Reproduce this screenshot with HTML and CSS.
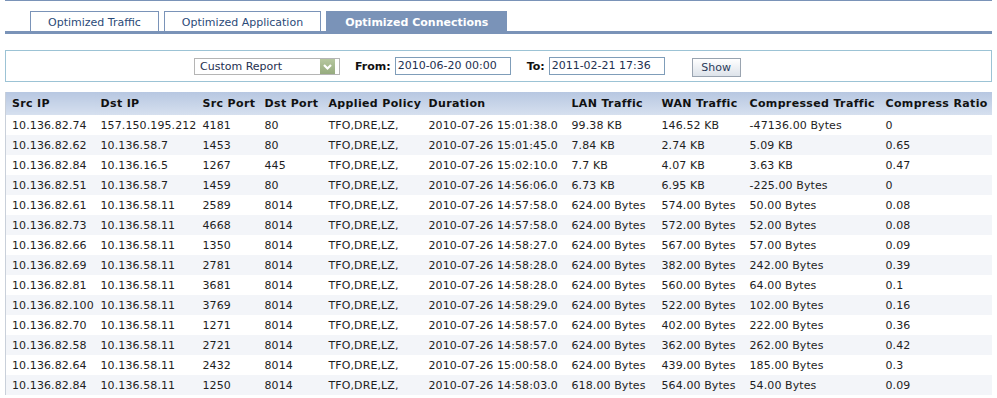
FILE: index.html
```html
<!DOCTYPE html>
<html>
<head>
<meta charset="utf-8">
<link rel="stylesheet" href="styles.css">
</head>
<body>
<div class="page">
  <div class="tabbar">
    <div class="tab">Optimized Traffic</div>
    <div class="tab">Optimized Application</div>
    <div class="tab active">Optimized Connections</div>
  </div>
  <div class="filter">
    <div class="select"><span>Custom Report</span><span class="arrow"><svg width="15" height="15" viewBox="0 0 15 15"><path d="M4 6 L7.5 9.5 L11 6" fill="none" stroke="#fff" stroke-width="2.2"/></svg></span></div>
    <label class="lbl from">From:</label>
    <div class="input">2010-06-20 00:00</div>
    <label class="lbl to">To:</label>
    <div class="input">2011-02-21 17:36</div>
    <button class="btn">Show</button>
  </div>
  <table class="grid">
    <colgroup>
      <col style="width:89px"><col style="width:102px"><col style="width:62px"><col style="width:64px"><col style="width:100px"><col style="width:143px"><col style="width:90px"><col style="width:88px"><col style="width:136px"><col style="width:112px">
    </colgroup>
    <thead>
      <tr><th>Src IP</th><th>Dst IP</th><th>Src Port</th><th>Dst Port</th><th>Applied Policy</th><th>Duration</th><th>LAN Traffic</th><th>WAN Traffic</th><th>Compressed Traffic</th><th>Compress Ratio</th></tr>
    </thead>
    <tbody>
      <tr><td>10.136.82.74</td><td>157.150.195.212</td><td>4181</td><td>80</td><td>TFO,DRE,LZ,</td><td>2010-07-26 15:01:38.0</td><td>99.38 KB</td><td>146.52 KB</td><td>-47136.00 Bytes</td><td>0</td></tr>
      <tr><td>10.136.82.62</td><td>10.136.58.7</td><td>1453</td><td>80</td><td>TFO,DRE,LZ,</td><td>2010-07-26 15:01:45.0</td><td>7.84 KB</td><td>2.74 KB</td><td>5.09 KB</td><td>0.65</td></tr>
      <tr><td>10.136.82.84</td><td>10.136.16.5</td><td>1267</td><td>445</td><td>TFO,DRE,LZ,</td><td>2010-07-26 15:02:10.0</td><td>7.7 KB</td><td>4.07 KB</td><td>3.63 KB</td><td>0.47</td></tr>
      <tr><td>10.136.82.51</td><td>10.136.58.7</td><td>1459</td><td>80</td><td>TFO,DRE,LZ,</td><td>2010-07-26 14:56:06.0</td><td>6.73 KB</td><td>6.95 KB</td><td>-225.00 Bytes</td><td>0</td></tr>
      <tr><td>10.136.82.61</td><td>10.136.58.11</td><td>2589</td><td>8014</td><td>TFO,DRE,LZ,</td><td>2010-07-26 14:57:58.0</td><td>624.00 Bytes</td><td>574.00 Bytes</td><td>50.00 Bytes</td><td>0.08</td></tr>
      <tr><td>10.136.82.73</td><td>10.136.58.11</td><td>4668</td><td>8014</td><td>TFO,DRE,LZ,</td><td>2010-07-26 14:57:58.0</td><td>624.00 Bytes</td><td>572.00 Bytes</td><td>52.00 Bytes</td><td>0.08</td></tr>
      <tr><td>10.136.82.66</td><td>10.136.58.11</td><td>1350</td><td>8014</td><td>TFO,DRE,LZ,</td><td>2010-07-26 14:58:27.0</td><td>624.00 Bytes</td><td>567.00 Bytes</td><td>57.00 Bytes</td><td>0.09</td></tr>
      <tr><td>10.136.82.69</td><td>10.136.58.11</td><td>2781</td><td>8014</td><td>TFO,DRE,LZ,</td><td>2010-07-26 14:58:28.0</td><td>624.00 Bytes</td><td>382.00 Bytes</td><td>242.00 Bytes</td><td>0.39</td></tr>
      <tr><td>10.136.82.81</td><td>10.136.58.11</td><td>3681</td><td>8014</td><td>TFO,DRE,LZ,</td><td>2010-07-26 14:58:28.0</td><td>624.00 Bytes</td><td>560.00 Bytes</td><td>64.00 Bytes</td><td>0.1</td></tr>
      <tr><td>10.136.82.100</td><td>10.136.58.11</td><td>3769</td><td>8014</td><td>TFO,DRE,LZ,</td><td>2010-07-26 14:58:29.0</td><td>624.00 Bytes</td><td>522.00 Bytes</td><td>102.00 Bytes</td><td>0.16</td></tr>
      <tr><td>10.136.82.70</td><td>10.136.58.11</td><td>1271</td><td>8014</td><td>TFO,DRE,LZ,</td><td>2010-07-26 14:58:57.0</td><td>624.00 Bytes</td><td>402.00 Bytes</td><td>222.00 Bytes</td><td>0.36</td></tr>
      <tr><td>10.136.82.58</td><td>10.136.58.11</td><td>2721</td><td>8014</td><td>TFO,DRE,LZ,</td><td>2010-07-26 14:58:57.0</td><td>624.00 Bytes</td><td>362.00 Bytes</td><td>262.00 Bytes</td><td>0.42</td></tr>
      <tr><td>10.136.82.64</td><td>10.136.58.11</td><td>2432</td><td>8014</td><td>TFO,DRE,LZ,</td><td>2010-07-26 15:00:58.0</td><td>624.00 Bytes</td><td>439.00 Bytes</td><td>185.00 Bytes</td><td>0.3</td></tr>
      <tr><td>10.136.82.84</td><td>10.136.58.11</td><td>1250</td><td>8014</td><td>TFO,DRE,LZ,</td><td>2010-07-26 14:58:03.0</td><td>618.00 Bytes</td><td>564.00 Bytes</td><td>54.00 Bytes</td><td>0.09</td></tr>
    </tbody>
  </table>
</div>
</body>
</html>
```

FILE: styles.css
```css
html, body {
  margin: 0;
  padding: 0;
  background: #fff;
  overflow: hidden;
}
body {
  font-family: "DejaVu Sans", Verdana, sans-serif;
  font-size: 11px;
  color: #1e1e1e;
}
.page {
  padding: 0 5px;
}
.tabbar {
  display: flex;
  gap: 5px;
  padding: 10px 0 0 25px;
  border-top: 1px solid #7a93b8;
  border-bottom: 3px solid #7a93b8;
}
.tab {
  height: 18px;
  padding-top: 1px;
  line-height: 19px;
  padding-left: 17px;
  padding-right: 17px;
  border: 1px solid #7a93b8;
  border-bottom: none;
  color: #2b4a78;
  background: #fff;
  white-space: nowrap;
}
.tab.active {
  background: #7a93b8;
  color: #fff;
  font-weight: bold;
  padding-left: 18px;
  padding-right: 18px;
}
.filter {
  margin-top: 16px;
  height: 30px;
  border: 1px solid #9cc3d5;
  display: flex;
  align-items: center;
  padding-left: 188px;
}
.select {
  box-sizing: border-box;
  width: 146px;
  height: 17px;
  border: 1px solid #b5b5b5;
  display: flex;
  align-items: center;
  justify-content: space-between;
  padding-left: 5px;
  padding-right: 4px;
  color: #1e3050;
}
.arrow {
  width: 15px;
  height: 15px;
  background: linear-gradient(#b6c79f, #96ab7e);
  display: flex;
}
.lbl {
  font-weight: bold;
  color: #111;
}
.from { margin-left: 15px; margin-right: 4px; }
.to { margin-left: 16px; margin-right: 4px; }
.input {
  box-sizing: border-box;
  width: 116px;
  height: 18px;
  line-height: 16px;
  border: 1px solid #7f9db9;
  padding-left: 2px;
  color: #1e3050;
  white-space: nowrap;
  overflow: hidden;
}
.btn {
  box-sizing: border-box;
  margin-left: 27px;
  width: 49px;
  height: 19px;
  margin-top: 2px;
  border: 1px solid #9aa4b0;
  background: linear-gradient(#ffffff, #dde3ea);
  font-family: "DejaVu Sans", Verdana, sans-serif;
  font-size: 11px;
  color: #2b3b5a;
  padding: 0;
}
.grid {
  margin-top: 10px;
  border-collapse: collapse;
  table-layout: fixed;
  width: 987px;
  border-left: 1px solid #c9d0da;
}
.grid th {
  height: 23px;
  padding: 0 0 0 6px;
  text-align: left;
  font-weight: bold;
  color: #111;
  white-space: nowrap;
  letter-spacing: 0.35px;
  background: linear-gradient(#b7c7e1, #d6e0ef);
}
.grid td {
  height: 20px;
  padding: 0 0 0 6px;
  white-space: nowrap;
  letter-spacing: 0.1px;
}
.grid tbody tr:nth-child(even) td {
  background: #f3f5f9;
}
```
